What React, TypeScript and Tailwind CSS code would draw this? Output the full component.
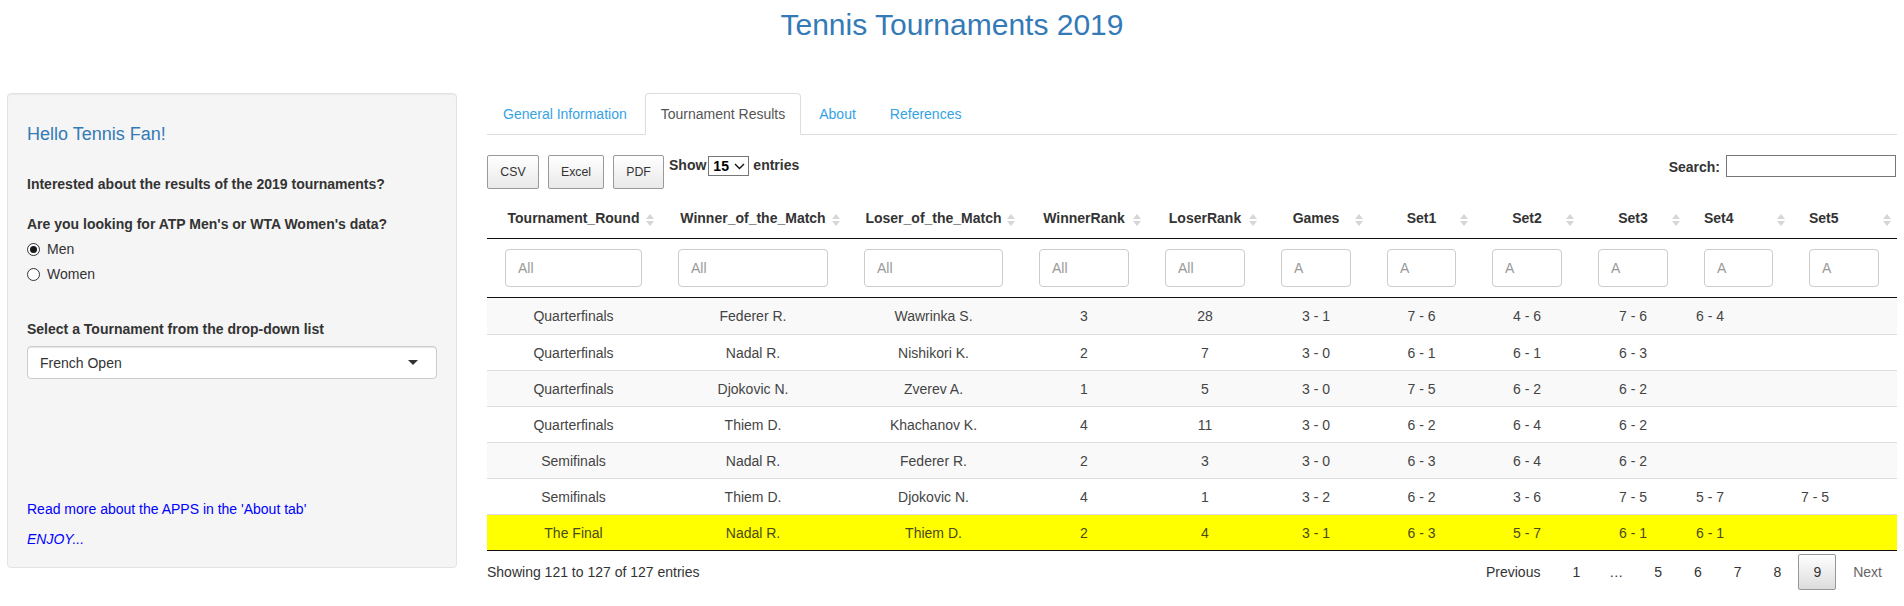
import React from 'react';

const COLS = 'grid grid-cols-[173px_186px_175px_126px_116px_106px_105px_106px_106px_105px_106px]';

const HEADERS: { label: string; left?: boolean; ph: string }[] = [
  { label: 'Tournament_Round', ph: 'All' },
  { label: 'Winner_of_the_Match', ph: 'All' },
  { label: 'Loser_of_the_Match', ph: 'All' },
  { label: 'WinnerRank', ph: 'All' },
  { label: 'LoserRank', ph: 'All' },
  { label: 'Games', ph: 'A' },
  { label: 'Set1', ph: 'A' },
  { label: 'Set2', ph: 'A' },
  { label: 'Set3', ph: 'A' },
  { label: 'Set4', left: true, ph: 'A' },
  { label: 'Set5', left: true, ph: 'A' },
];

const ROWS: string[][] = [
  ['Quarterfinals', 'Federer R.', 'Wawrinka S.', '3', '28', '3 - 1', '7 - 6', '4 - 6', '7 - 6', '6 - 4', ''],
  ['Quarterfinals', 'Nadal R.', 'Nishikori K.', '2', '7', '3 - 0', '6 - 1', '6 - 1', '6 - 3', '', ''],
  ['Quarterfinals', 'Djokovic N.', 'Zverev A.', '1', '5', '3 - 0', '7 - 5', '6 - 2', '6 - 2', '', ''],
  ['Quarterfinals', 'Thiem D.', 'Khachanov K.', '4', '11', '3 - 0', '6 - 2', '6 - 4', '6 - 2', '', ''],
  ['Semifinals', 'Nadal R.', 'Federer R.', '2', '3', '3 - 0', '6 - 3', '6 - 4', '6 - 2', '', ''],
  ['Semifinals', 'Thiem D.', 'Djokovic N.', '4', '1', '3 - 2', '6 - 2', '3 - 6', '7 - 5', '5 - 7', '7 - 5'],
  ['The Final', 'Nadal R.', 'Thiem D.', '2', '4', '3 - 1', '6 - 3', '5 - 7', '6 - 1', '6 - 1', ''],
];

const SortIcon = () => (
  <svg width="8" height="12" viewBox="0 0 8 12">
    <path d="M4 0 L8 5 L0 5 Z" fill="#d6d6d6" />
    <path d="M0 7 L8 7 L4 12 Z" fill="#d6d6d6" />
  </svg>
);

const Radio = ({ checked, label }: { checked?: boolean; label: string }) => (
  <div className="mt-[5px] flex h-[20px] items-center gap-[7px]">
    <span className="flex h-[13px] w-[13px] items-center justify-center rounded-full border border-[#333] bg-white">
      {checked && <span className="h-[7px] w-[7px] rounded-full bg-[#1a1a1a]" />}
    </span>
    <span>{label}</span>
  </div>
);

const Sidebar = () => (
  <div className="w-[450px] shrink-0 rounded-[4px] border border-[#e3e3e3] bg-[#f5f5f5] px-[19px] pt-[19px] pb-[18px] shadow-[inset_0_1px_1px_rgba(0,0,0,0.05)]">
    <h4 className="mt-[11px] text-[18px] leading-[20px] text-[#337ab7]">Hello Tennis Fan!</h4>
    <p className="mt-[30px] font-bold">Interested about the results of the 2019 tournaments?</p>
    <p className="mt-[20px] font-bold">Are you looking for ATP Men's or WTA Women's data?</p>
    <Radio checked label="Men" />
    <Radio label="Women" />
    <p className="mt-[35px] font-bold">Select a Tournament from the drop-down list</p>
    <div className="mt-[7px] flex h-[33px] items-center justify-between rounded-[4px] border border-[#ccc] bg-white pl-[12px] pr-[18px] shadow-[inset_0_1px_1px_rgba(0,0,0,0.1)]">
      <span>French Open</span>
      <span className="h-0 w-0 border-x-[5px] border-t-[5px] border-x-transparent border-t-[#333]" />
    </div>
    <p className="mt-[120px] text-[#0000ff]">Read more about the APPS in the 'About tab'</p>
    <p className="mt-[10px] italic text-[#0000ff]">ENJOY...</p>
  </div>
);

const Tabs = () => {
  const tabs = ['General Information', 'Tournament Results', 'About', 'References'];
  return (
    <div className="flex border-b border-[#ddd]">
      {tabs.map((t, i) =>
        i === 1 ? (
          <div key={t} className="-mb-px mr-[2px] rounded-t-[4px] border border-[#ddd] border-b-white bg-white px-[15px] py-[10px] text-[#555]">
            {t}
          </div>
        ) : (
          <div key={t} className="-mb-px mr-[2px] border border-transparent px-[15px] py-[10px] text-[#35a2e5]">
            {t}
          </div>
        )
      )}
    </div>
  );
};

const ExportButton = ({ label, w, first }: { label: string; w: string; first?: boolean }) => (
  <div className={`${w} ${first ? '' : 'ml-[9px]'} flex h-[34px] items-center justify-center rounded-[2px] border border-[#999] bg-linear-to-b from-white to-[#e9e9e9] text-[12.3px] text-[#333]`}>
    {label}
  </div>
);

const Toolbar = () => (
  <div className="mt-[20px] flex h-[34px] items-start">
    <ExportButton label="CSV" w="w-[52px]" first />
    <ExportButton label="Excel" w="w-[56px]" />
    <ExportButton label="PDF" w="w-[51px]" />
    <div className="ml-[5px] flex items-start font-bold">
      <span>Show</span>
      <div className="ml-[2px] mt-[1px] flex h-[20px] w-[41px] items-center justify-between border border-[#767676] bg-white pl-[4px] pr-[3px] text-black">
        <span>15</span>
        <svg width="11" height="7" viewBox="0 0 11 7">
          <polyline points="1,1 5.5,5.5 10,1" fill="none" stroke="#111" strokeWidth="1.4" />
        </svg>
      </div>
      <span className="ml-[4px]">entries</span>
    </div>
    <div className="ml-auto mr-[1px] flex items-start">
      <span className="mt-[2px] font-bold">Search:</span>
      <div className="ml-[6px] h-[22px] w-[170px] border border-[#767676] bg-white" />
    </div>
  </div>
);

const Table = () => (
  <div className="mt-[9px]">
    <div className={`${COLS} border-b border-[#111]`}>
      {HEADERS.map((h) => (
        <div key={h.label} className={`relative px-[18px] py-[10px] font-bold ${h.left ? 'text-left' : 'text-center'}`}>
          {h.label}
          <span className="absolute right-[6px] top-[16px]">
            <SortIcon />
          </span>
        </div>
      ))}
    </div>
    <div className={`${COLS} border-b border-[#111]`}>
      {HEADERS.map((h) => (
        <div key={h.label} className="px-[18px] py-[10px]">
          <input
            readOnly
            placeholder={h.ph}
            className="h-[38px] w-full rounded-[4px] border border-[#ccc] bg-white px-[12px] text-[14px] outline-none placeholder:text-[#999]"
          />
        </div>
      ))}
    </div>
    <div className="border-b border-[#111] text-[#444]">
      {ROWS.map((r, i) => {
        const bg = i === 6 ? 'bg-[#ffff00] text-[#4a4a1a]' : i % 2 === 0 ? 'bg-[#f9f9f9]' : 'bg-white';
        const border = i === 0 ? '' : 'border-t border-[#ddd]';
        return (
          <div key={i} className={`${COLS} h-[36px] ${bg} ${border}`}>
            {r.map((c, j) => (
              <div key={j} className={`flex items-center px-[10px] ${HEADERS[j].left ? 'justify-start' : 'justify-center'}`}>
                {c}
              </div>
            ))}
          </div>
        );
      })}
    </div>
  </div>
);

const PageButton = ({ label, current, disabled }: { label: string; current?: boolean; disabled?: boolean }) => (
  <div
    className={`ml-[2px] rounded-[2px] border px-[14px] py-[7px] ${
      current ? 'border-[#979797] bg-linear-to-b from-white to-[#dcdcdc]' : 'border-transparent'
    } ${disabled ? 'text-[#666]' : 'text-[#333]'}`}
  >
    {label}
  </div>
);

const Footer = () => (
  <div className="flex items-start justify-between">
    <div className="pt-[10.5px]">Showing 121 to 127 of 127 entries</div>
    <div className="flex items-start pt-[3px]">
      <PageButton label="Previous" />
      <PageButton label="1" />
      <span className="px-[14px] py-[8px]">…</span>
      <PageButton label="5" />
      <PageButton label="6" />
      <PageButton label="7" />
      <PageButton label="8" />
      <PageButton label="9" current />
      <PageButton label="Next" disabled />
    </div>
  </div>
);

export default function App() {
  return (
    <div className="min-h-[606px] bg-white font-['Liberation_Sans',Arial,sans-serif] text-[14px] leading-[20px] text-[#333]">
      <h1 className="pt-[8px] text-center text-[30px] leading-[33px] text-[#337ab7]">Tennis Tournaments 2019</h1>
      <div className="mt-[52px] flex items-start gap-[30px] px-[7px]">
        <Sidebar />
        <div className="min-w-0 flex-1">
          <Tabs />
          <Toolbar />
          <Table />
          <Footer />
        </div>
      </div>
    </div>
  );
}
